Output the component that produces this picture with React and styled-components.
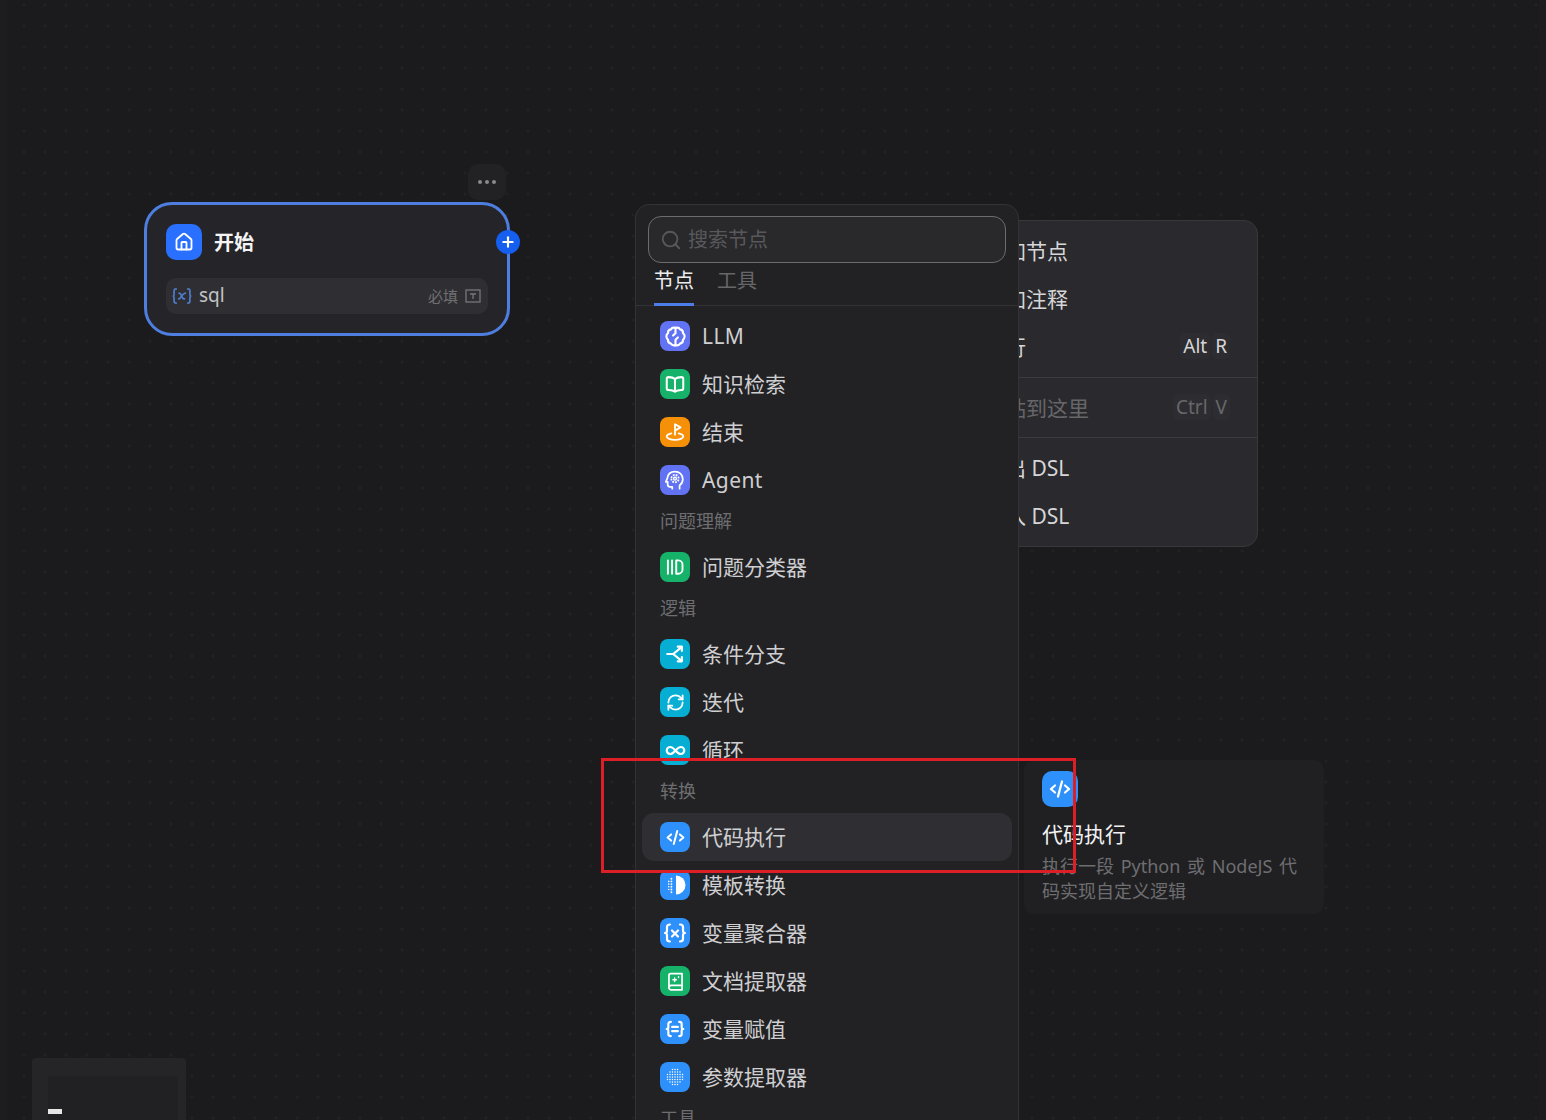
import React from "react";
import styled, { createGlobalStyle } from "styled-components";
import { RefreshCw, Infinity as InfinityIcon, Search, House, Plus } from "lucide-react";

const GlobalStyle = createGlobalStyle`
  html, body { margin: 0; padding: 0; background: #1b1b1d; }
  body { font-family: "Noto Sans", "Noto Sans CJK SC", sans-serif; }
  * { box-sizing: border-box; }
`;

const Canvas = styled.div`
  position: relative;
  width: 1546px;
  height: 1120px;
  overflow: hidden;
  background-color: #1b1b1d;
  background-image: radial-gradient(circle, #252528 1px, transparent 1.4px);
  background-size: 21px 21px;
  background-position: 13.5px 15.5px;
`;

const EdgeBand = styled.div`
  position: absolute;
  top: 0;
  bottom: 0;
  ${(p) => (p.$right ? "right: 0;" : "left: 0;")}
  width: 7px;
  background: #1d1d1f;
`;

/* start node */
const NodeMenu = styled.div`
  position: absolute;
  left: 468px;
  top: 164px;
  width: 38px;
  height: 36px;
  display: flex;
  align-items: center;
  justify-content: center;
  gap: 3px;
  border-radius: 10px;
  background: #222224;
`;

const Dot = styled.span`
  width: 4px;
  height: 4px;
  border-radius: 50%;
  background: #8a8a8d;
`;

const StartNode = styled.div`
  position: absolute;
  left: 144px;
  top: 202px;
  width: 366px;
  height: 134px;
  padding: 19px 19px 0;
  border: 3px solid #4d7ee0;
  border-radius: 28px;
  background: #252529;
`;

const NodeHead = styled.div`
  display: flex;
  align-items: center;
  gap: 12px;
  height: 36px;
`;

const NodeIcon = styled.div`
  width: 36px;
  height: 36px;
  display: flex;
  align-items: center;
  justify-content: center;
  border-radius: 10px;
  background: #2970ff;
  color: #fff;
`;

const NodeTitle = styled.div`
  margin-bottom: 2px;
  font-size: 20px;
  font-weight: 700;
  color: #f4f4f5;
`;

const VarRow = styled.div`
  display: flex;
  align-items: center;
  height: 36px;
  margin-top: 18px;
  padding: 0 7px 0 6px;
  border-radius: 10px;
  background: #2f2f33;
`;

const VarName = styled.span`
  margin: 0 0 3px 7px;
  font-size: 19px;
  color: #c4c4c6;
`;

const VarRequired = styled.span`
  margin: 0 7px 2px auto;
  font-size: 15px;
  color: #6f6f72;
`;

const AddHandle = styled.div`
  position: absolute;
  left: 496px;
  top: 230px;
  width: 24px;
  height: 24px;
  display: flex;
  align-items: center;
  justify-content: center;
  border-radius: 50%;
  background: #155eef;
  color: #fff;
`;

/* context menu behind the block picker */
const ContextMenu = styled.div`
  position: absolute;
  left: 967px;
  top: 220px;
  width: 291px;
  border: 1px solid #38383b;
  border-radius: 14px;
  background: #2a2a2e;
`;

const MenuGroup = styled.div`
  padding: 6px 0 ${(p) => (p.$tight ? 5 : 6)}px;
  border-top: ${(p) => (p.$first ? "none" : "1px solid #3c3c40")};
`;

const MenuItem = styled.div`
  display: flex;
  align-items: center;
  justify-content: space-between;
  height: 48px;
  padding: 0 27px 2px 16px;
  font-size: 21px;
  color: ${(p) => (p.$disabled ? "#67676a" : "#d6d6d8")};
`;

const Keys = styled.div`
  display: flex;
  gap: 2px;
  font-size: 19px;
`;

const Key = styled.span`
  padding: 0 3px;
  border-radius: 5px;
  background: #2d2d31;
`;

/* block picker */
const Picker = styled.div`
  position: absolute;
  left: 635px;
  top: 204px;
  width: 384px;
  height: 940px;
  border: 1px solid #333336;
  border-radius: 14px;
  background: #222225;
`;

const SearchBox = styled.div`
  display: flex;
  align-items: center;
  gap: 6px;
  height: 47px;
  margin: 11px 12px 0;
  padding-left: 11px;
  border: 1px solid #6c6c6f;
  border-radius: 13px;
  background: #29292c;
  color: #58585b;
`;

const SearchText = styled.span`
  margin-bottom: 2px;
  font-size: 20px;
`;

const Tabs = styled.div`
  display: flex;
  gap: 23px;
  height: 43px;
  padding-left: 18px;
  border-bottom: 1px solid #333336;
`;

const Tab = styled.div`
  height: 43px;
  padding-top: 4px;
  font-size: 20px;
  line-height: 28px;
  color: ${(p) => (p.$active ? "#ededee" : "#67676a")};
  border-bottom: 3px solid ${(p) => (p.$active ? "#4d7ee8" : "transparent")};
`;

const List = styled.div`
  padding: 6px 6px 0;
`;

const GroupLabel = styled.div`
  height: 39px;
  padding: 0 0 5px 18px;
  font-size: 18px;
  line-height: 34px;
  color: #6e6e71;
`;

const Row = styled.div`
  display: flex;
  align-items: center;
  gap: 12px;
  height: 48px;
  padding-left: 18px;
  border-radius: 12px;
  font-size: 21px;
  color: #cfcfd1;
  background: ${(p) => (p.$active ? "#2f2f33" : "transparent")};
`;

const RowName = styled.span`
  margin-bottom: ${(p) => (p.$latin ? 0 : 2)}px;
  letter-spacing: ${(p) => (p.$latin ? "0.4px" : "normal")};
`;

const Tile = styled.div`
  flex: none;
  width: ${(p) => p.$size || 30}px;
  height: ${(p) => p.$size || 30}px;
  display: flex;
  align-items: center;
  justify-content: center;
  border-radius: ${(p) => (p.$size ? 10 : 8)}px;
  background: ${(p) => p.$bg};
  color: #fff;
`;

/* tooltip */
const Tip = styled.div`
  position: absolute;
  left: 1024px;
  top: 760px;
  width: 300px;
  height: 154px;
  padding: 11px 18px;
  border-radius: 10px;
  background: #202022;
`;

const TipTitle = styled.div`
  margin-top: 11px;
  font-size: 21px;
  line-height: 32px;
  color: #f2f2f3;
`;

const TipText = styled.div`
  margin-top: 4px;
  font-size: 18px;
  line-height: 25px;
  word-spacing: 2px;
  color: #6e6e71;
`;

/* minimap */
const MiniMap = styled.div`
  position: absolute;
  left: 32px;
  top: 1058px;
  width: 154px;
  height: 80px;
  padding: 18px 8px 0 16px;
  border-radius: 4px 4px 0 0;
  background: #252528;
`;

const MiniView = styled.div`
  height: 100%;
  padding-top: 33px;
  background: #212123;
`;

const MiniNode = styled.div`
  width: 14px;
  height: 5px;
  background: #e6e6e6;
`;

/* annotation drawn on the screenshot */
const RedBox = styled.div`
  position: absolute;
  left: 601px;
  top: 758px;
  width: 475px;
  height: 115px;
  border: 3px solid #dc1f26;
  pointer-events: none;
`;

const Glyph = ({ children, size = 22, sw = 2 }) => (
  <svg width={size} height={size} viewBox="0 0 24 24" fill="none" stroke="currentColor"
    strokeWidth={sw} strokeLinecap="round" strokeLinejoin="round">
    {children}
  </svg>
);

const CodeIcon = ({ size = 21 }) => (
  <Glyph size={size} sw={2.3}>
    <path d="M7 8.5 3 12l4 3.500M17 8.500l4 3.500-4 3.500M14 4.500l-4 15" />
  </Glyph>
);

const BrainIcon = () => (
  <Glyph size={23} sw={2.2}>
    <path d="M12 3C10 2.400 8 3 7.200 4.600 5.200 5 4 6.600 4.200 8.500 2.900 9.500 2.400 10.700 2.500 12c.1 1.300.7 2.500 1.700 3.400-.2 2 1 3.600 3 4 .8 1.600 2.800 2.200 4.800 1.600 2 .6 4 0 4.800-1.600 2-.4 3.200-2 3-4 1-.9 1.600-2.100 1.700-3.400.1-1.300-.4-2.500-1.700-3.500.2-1.900-1-3.500-3-3.900C16 3 14 2.400 12 3Z" />
    <path d="M12 3v5.500l-2.500 2.500M12 21v-5.500l2.500-2.500" />
  </Glyph>
);

const BookIcon = () => (
  <Glyph sw={2.2}>
    <path d="M12 6.500C10.500 5.200 8 4.500 5 4.500A2 2 0 0 0 3 6.500v10a2 2 0 0 0 2 2c3 0 5.500.6 7 2 1.500-1.400 4-2 7-2a2 2 0 0 0 2-2v-10a2 2 0 0 0-2-2c-3 0-5.500.7-7 2ZM12 6.500v14" />
  </Glyph>
);

const FlagIcon = () => (
  <Glyph>
    <path d="M12 15V3.500l6 3.500-6 3.500" />
    <path d="M8 13.500c-3 .7-5 1.900-5 3.300 0 2.100 4 3.700 9 3.700s9-1.600 9-3.700c0-1.400-2-2.600-5-3.300" />
  </Glyph>
);

const AgentIcon = () => (
  <Glyph sw={1.9}>
    <g transform="matrix(-1 0 0 1 24 0)">
      <path d="M7 21.500v-3.500C4.600 16.300 3.500 13.800 3.500 11.200 3.500 6.300 7.300 2.800 12 2.800s7.800 3 8.300 7.200l1.700 4h-2v3c0 1.500-1 2.500-2.500 2.500H15v2" />
      <circle cx="12" cy="10.500" r="1.500" strokeWidth="1.500" />
      <circle cx="12" cy="10.500" r="4" strokeDasharray="1.900 1.240" strokeWidth="2" strokeLinecap="butt" />
    </g>
  </Glyph>
);

const ClassifierIcon = () => (
  <Glyph size={20} sw={2.3}>
    <path d="M3.500 4v16M8.500 4v16" />
    <path d="M13.500 4h2.500a5 5 0 0 1 5 5v6a5 5 0 0 1-5 5h-2.500Z" />
  </Glyph>
);

const BranchIcon = () => (
  <Glyph sw={2.4}>
    <path d="M3.500 12H10l8.500-7M10 12l8.500 7" />
    <path d="M15 4h4.500v4.500M15 20h4.500v-4.500" />
  </Glyph>
);

const TemplateIcon = () => {
  const dots = [];
  for (let x = 3; x <= 11; x += 2.7) {
    for (let y = 3; y <= 21; y += 2.7) {
      if (Math.hypot(x - 13, y - 12) < 9.5) {
        dots.push(<circle key={`${x}-${y}`} cx={x} cy={y} r={0.45 + x * 0.06} />);
      }
    }
  }
  return (
    <svg width="24" height="24" viewBox="0 0 24 24" fill="currentColor">
      <path d="M13 2.500a9.500 9.500 0 0 1 0 19Z" />
      {dots}
    </svg>
  );
};

const BraceIcon = ({ inner, size = 24, sw = 2.2 }) => (
  <Glyph size={size} sw={sw}>
    <path d="M7 3.500c-2 0-3 1-3 2.500v3.500c0 1.300-.7 2.500-2 2.500 1.300 0 2 1.200 2 2.500V18c0 1.500 1 2.500 3 2.500" />
    <path d="M17 3.500c2 0 3 1 3 2.500v3.500c0 1.300.7 2.500 2 2.500-1.300 0-2 1.200-2 2.500V18c0 1.500-1 2.500-3 2.500" />
    {inner}
  </Glyph>
);

const DocIcon = () => (
  <Glyph size={21} sw={2}>
    <path d="M4.500 19V5a2 2 0 0 1 2-2h13v18.500H7A2.500 2.500 0 0 1 4.500 19Zm0 0A2.500 2.500 0 0 1 7 16.500h12.500" />
    <path d="M11 8v4M9 10h4M15.500 6.500v1" strokeWidth="1.600" />
  </Glyph>
);

const ParamIcon = () => {
  const dots = [];
  for (let x = 3; x <= 21; x += 3) {
    for (let y = 3; y <= 21; y += 3) {
      if (Math.hypot(x - 12, y - 12) < 10) {
        dots.push(<circle key={`${x}-${y}`} cx={x} cy={y} r="0.9" />);
      }
    }
  }
  return <svg width="20" height="20" viewBox="0 0 24 24" fill="currentColor">{dots}</svg>;
};

const TextBoxIcon = () => (
  <svg width="16" height="16" viewBox="0 0 16 16" fill="none" stroke="#77777a" strokeWidth="1.300">
    <rect x="1" y="2" width="14" height="12" />
    <path d="M5 6h6M8 6v5" />
  </svg>
);

const VarIcon = () => (
  <svg width="20" height="20" viewBox="0 0 24 24" fill="none" stroke="#4d7bc7" strokeWidth="2.100" strokeLinecap="round">
    <path d="M5 3.500c-1.700 0-2.500 1-2.500 2.500v3.500c0 1.300-.6 2.500-1.700 2.500 1.100 0 1.700 1.200 1.700 2.500V18c0 1.500.8 2.500 2.500 2.500" />
    <path d="M19 3.500c1.700 0 2.500 1 2.500 2.500v3.500c0 1.300.6 2.500 1.700 2.500-1.100 0-1.700 1.200-1.700 2.500V18c0 1.500-.8 2.500-2.500 2.500" />
    <path d="M8.500 8.500c2.200 0 2.300 1.500 3 3.500s1 3.500 3.500 3.500M16 8.500c-2 0-3.500 2.500-4.500 3.500s-1.500 3.500-3.500 3.500" />
  </svg>
);

const BLUE = "#2e90fa";
const GREEN = "#17b26a";
const INDIGO = "#6172f3";
const CYAN = "#06aed4";

const groups = [
  {
    items: [
      { name: "LLM", latin: true, bg: INDIGO, icon: <BrainIcon /> },
      { name: "知识检索", bg: GREEN, icon: <BookIcon /> },
      { name: "结束", bg: "#f79009", icon: <FlagIcon /> },
      { name: "Agent", latin: true, bg: INDIGO, icon: <AgentIcon /> },
    ],
  },
  { label: "问题理解", items: [{ name: "问题分类器", bg: GREEN, icon: <ClassifierIcon /> }] },
  {
    label: "逻辑",
    items: [
      { name: "条件分支", bg: CYAN, icon: <BranchIcon /> },
      { name: "迭代", bg: CYAN, icon: <RefreshCw size={19} strokeWidth={2.3} /> },
      { name: "循环", bg: CYAN, icon: <InfinityIcon size={21} strokeWidth={2.5} /> },
    ],
  },
  {
    label: "转换",
    items: [
      { name: "代码执行", bg: BLUE, icon: <CodeIcon />, active: true },
      { name: "模板转换", bg: BLUE, icon: <TemplateIcon /> },
      { name: "变量聚合器", bg: BLUE, icon: <BraceIcon inner={<path d="m9 9.500 6 6M15 9.500l-6 6" />} /> },
      { name: "文档提取器", bg: GREEN, icon: <DocIcon /> },
      { name: "变量赋值", bg: BLUE, icon: <BraceIcon size={20} sw={2.6} inner={<path d="M8.500 9.500h7M8.500 14.500h7" />} /> },
      { name: "参数提取器", bg: BLUE, icon: <ParamIcon /> },
    ],
  },
  { label: "工具", items: [] },
];

const menuGroups = [
  [
    { text: "添加节点" },
    { text: "添加注释" },
    { text: "运行", keys: ["Alt", "R"] },
  ],
  [{ text: "粘贴到这里", keys: ["Ctrl", "V"], disabled: true }],
  [{ text: "导出 DSL" }, { text: "导入 DSL" }],
];

export default function App() {
  return (
    <>
      <GlobalStyle />
      <Canvas>
        <EdgeBand />
        <EdgeBand $right />

        <NodeMenu>
          <Dot />
          <Dot />
          <Dot />
        </NodeMenu>
        <StartNode>
          <NodeHead>
            <NodeIcon>
              <House size={20} strokeWidth={2.2} />
            </NodeIcon>
            <NodeTitle>开始</NodeTitle>
          </NodeHead>
          <VarRow>
            <VarIcon />
            <VarName>sql</VarName>
            <VarRequired>必填</VarRequired>
            <TextBoxIcon />
          </VarRow>
        </StartNode>
        <AddHandle>
          <Plus size={16} strokeWidth={3.2} />
        </AddHandle>

        <ContextMenu>
          {menuGroups.map((group, i) => (
            <MenuGroup key={i} $first={i === 0} $tight={i === 1}>
              {group.map((item) => (
                <MenuItem key={item.text} $disabled={item.disabled}>
                  {item.text}
                  {item.keys && (
                    <Keys>
                      {item.keys.map((k) => (
                        <Key key={k}>{k}</Key>
                      ))}
                    </Keys>
                  )}
                </MenuItem>
              ))}
            </MenuGroup>
          ))}
        </ContextMenu>

        <Picker>
          <SearchBox>
            <Search size={22} strokeWidth={2} />
            <SearchText>搜索节点</SearchText>
          </SearchBox>
          <Tabs>
            <Tab $active>节点</Tab>
            <Tab>工具</Tab>
          </Tabs>
          <List>
            {groups.map((group, i) => (
              <div key={i}>
                {group.label && <GroupLabel>{group.label}</GroupLabel>}
                {group.items.map((item) => (
                  <Row key={item.name} $active={item.active}>
                    <Tile $bg={item.bg}>{item.icon}</Tile>
                    <RowName $latin={item.latin}>{item.name}</RowName>
                  </Row>
                ))}
              </div>
            ))}
          </List>
        </Picker>

        <Tip>
          <Tile $bg={BLUE} $size={36}>
            <CodeIcon size={24} />
          </Tile>
          <TipTitle>代码执行</TipTitle>
          <TipText>执行一段 Python 或 NodeJS 代码实现自定义逻辑</TipText>
        </Tip>

        <MiniMap>
          <MiniView>
            <MiniNode />
          </MiniView>
        </MiniMap>

        <RedBox />
      </Canvas>
    </>
  );
}
